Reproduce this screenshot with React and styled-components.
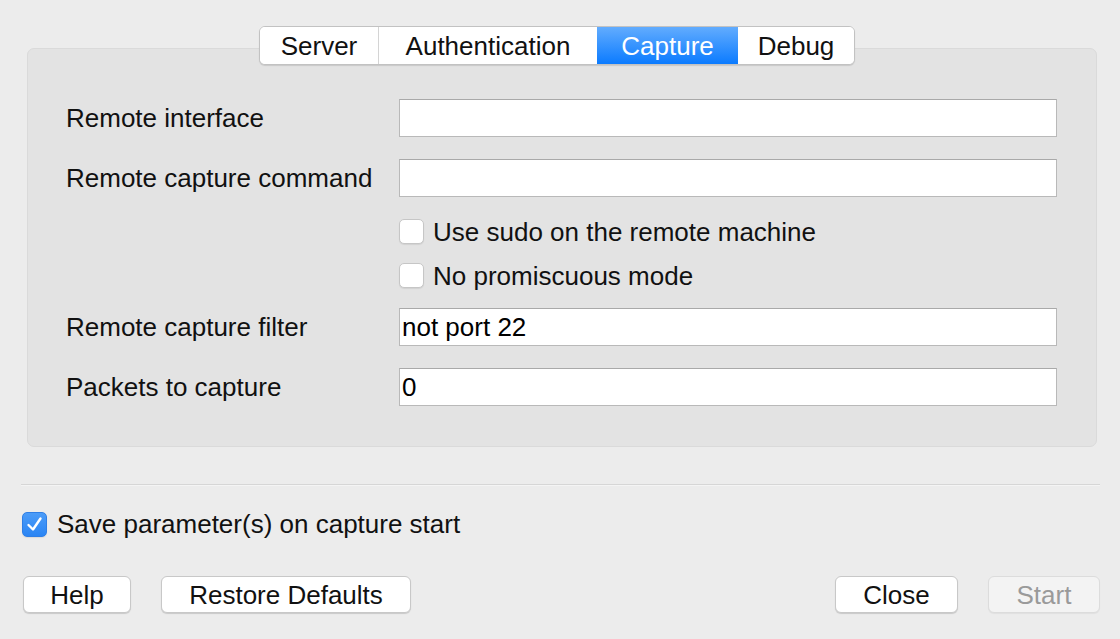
import React from "react";
import styled, { createGlobalStyle } from "styled-components";

const Global = createGlobalStyle`
  html, body { margin: 0; padding: 0; background: #ececec; }
  body { font-family: "Liberation Sans", Arial, sans-serif; }
  * { box-sizing: border-box; }
`;

const Window = styled.div`
  width: 1120px;
  height: 639px;
  background: #ececec;
  padding: 26px 20px 0 21px;
  display: flex;
  flex-direction: column;
  color: #111;
  font-size: 26px;
  line-height: 30px;
`;

const TabSection = styled.div`
  display: flex;
  flex-direction: column;
  margin: 0 3px 0 6px;
`;

const TabBar = styled.div`
  display: flex;
  justify-content: center;
  padding-right: 10px;
  position: relative;
  z-index: 1;
`;

const Tabs = styled.div`
  display: flex;
  height: 39px;
  background: #fff;
  border: 1px solid #c2c2c2;
  border-radius: 6px;
  overflow: hidden;
  box-shadow: 0 1px 1px rgba(0, 0, 0, 0.12);
`;

const Tab = styled.div`
  display: flex;
  align-items: center;
  justify-content: center;
  width: ${(p) => p.$w}px;
  height: 100%;
  color: ${(p) => (p.$active ? "#fff" : "#111")};
  background: ${(p) =>
    p.$active ? "linear-gradient(#62acfe, #0b7bff)" : "#fff"};
  border-left: ${(p) => (p.$first || p.$active || p.$afterActive ? "none" : "1px solid #d4d4d4")};
  padding-top: 1px;
`;

const Panel = styled.div`
  margin-top: -17px;
  height: 399px;
  background: #e3e3e3;
  border: 1px solid #dadada;
  border-radius: 7px;
  padding: 50px 39px 0 38px;
  display: flex;
  flex-direction: column;
`;

const Row = styled.div`
  display: grid;
  grid-template-columns: 333px 1fr;
  align-items: center;
  margin-top: ${(p) => p.$mt || 0}px;
`;

const Label = styled.div`
  color: #111;
`;

const TextInput = styled.div`
  height: 38px;
  background: #fff;
  border: 1px solid #b9b9b9;
  border-top-color: #a9a9a9;
  padding: 0 2px;
  display: flex;
  align-items: center;
  color: #000;
`;

const CheckLine = styled.label`
  grid-column: 2;
  display: flex;
  align-items: center;
  gap: 9px;
  height: 25px;
`;

const Box = styled.span`
  width: 25px;
  height: 25px;
  border-radius: 5px;
  background: ${(p) => (p.$checked ? "linear-gradient(#4c9cf8, #2a85f4)" : "#fff")};
  border: 1px solid ${(p) => (p.$checked ? "#2f7fe6" : "#c6c6c6")};
  box-shadow: 0 1px 1px rgba(0, 0, 0, 0.08);
  display: flex;
  align-items: center;
  justify-content: center;
  flex: none;
`;

const Separator = styled.div`
  margin-top: 37px;
  height: 2px;
  border-top: 1px solid #d6d6d6;
  border-bottom: 1px solid #f4f4f4;
`;

const SaveRow = styled.label`
  display: flex;
  align-items: center;
  gap: 10px;
  height: 26px;
  margin-top: 25px;
  margin-left: 1px;
`;

const ButtonRow = styled.div`
  display: flex;
  align-items: center;
  margin-top: 39px;
  padding-left: 2px;
`;

const Button = styled.div`
  height: 37px;
  width: ${(p) => p.$w}px;
  margin-left: ${(p) => p.$ml || 0}px;
  display: flex;
  align-items: center;
  justify-content: center;
  border-radius: 6px;
  background: ${(p) => (p.$disabled ? "#f3f3f3" : "#fff")};
  color: ${(p) => (p.$disabled ? "#9a9a9a" : "#111")};
  border: 1px solid ${(p) => (p.$disabled ? "#dcdcdc" : "#c8c8c8")};
  box-shadow: 0 1px 1px rgba(0, 0, 0, ${(p) => (p.$disabled ? 0.05 : 0.15)});
`;

const Spacer = styled.div`
  flex: 1;
`;

const Check = () => (
  <svg width="19" height="19" viewBox="0 0 19 19">
    <path d="M3.5 10 L8 14.5 L15.5 3.5" fill="none" stroke="#fff" strokeWidth="2.4" strokeLinecap="round" strokeLinejoin="round" />
  </svg>
);

export default function App() {
  const tabs = [
    { t: "Server", w: 118 },
    { t: "Authentication", w: 219 },
    { t: "Capture", w: 141, active: true },
    { t: "Debug", w: 116 },
  ];
  return (
    <Window>
      <Global />
      <TabSection>
        <TabBar>
          <Tabs>
            {tabs.map((tab, i) => (
              <Tab
                key={tab.t}
                $w={tab.w}
                $first={i === 0}
                $active={tab.active}
                $afterActive={i > 0 && tabs[i - 1].active}
              >
                {tab.t}
              </Tab>
            ))}
          </Tabs>
        </TabBar>
        <Panel>
          <Row>
            <Label>Remote interface</Label>
            <TextInput />
          </Row>
          <Row $mt={22}>
            <Label>Remote capture command</Label>
            <TextInput />
          </Row>
          <Row $mt={22}>
            <CheckLine>
              <Box />
              Use sudo on the remote machine
            </CheckLine>
          </Row>
          <Row $mt={19}>
            <CheckLine>
              <Box />
              No promiscuous mode
            </CheckLine>
          </Row>
          <Row $mt={20}>
            <Label>Remote capture filter</Label>
            <TextInput>not port 22</TextInput>
          </Row>
          <Row $mt={22}>
            <Label>Packets to capture</Label>
            <TextInput>0</TextInput>
          </Row>
        </Panel>
      </TabSection>
      <Separator />
      <SaveRow>
        <Box $checked>
          <Check />
        </Box>
        Save parameter(s) on capture start
      </SaveRow>
      <ButtonRow>
        <Button $w={108}>Help</Button>
        <Button $w={250} $ml={30}>Restore Defaults</Button>
        <Spacer />
        <Button $w={123}>Close</Button>
        <Button $w={112} $ml={30} $disabled>Start</Button>
      </ButtonRow>
    </Window>
  );
}
